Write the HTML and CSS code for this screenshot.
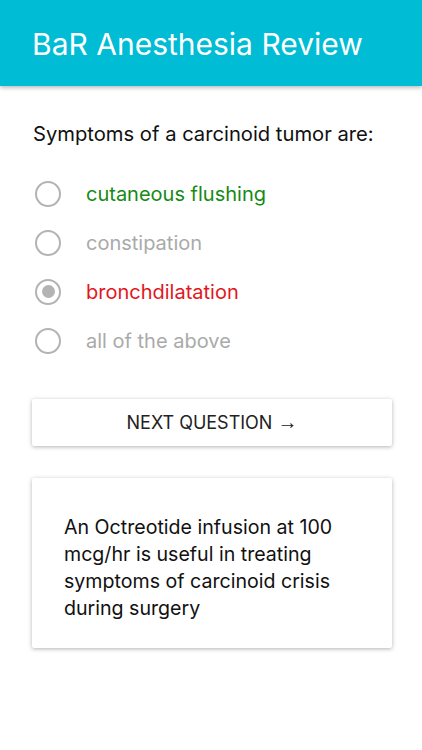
FILE: index.html
```html
<!DOCTYPE html>
<html>
<head>
<meta charset="utf-8">
<link rel="stylesheet" href="styles.css">
</head>
<body>
<header class="appbar"><h1 class="title">BaR Anesthesia Review</h1></header>
<main class="content">
  <p class="question">Symptoms of a carcinoid tumor are:</p>
  <ul class="options">
    <li class="option correct"><span class="radio"></span><span class="label">cutaneous flushing</span></li>
    <li class="option"><span class="radio"></span><span class="label">constipation</span></li>
    <li class="option wrong"><span class="radio checked"></span><span class="label">bronchdilatation</span></li>
    <li class="option"><span class="radio"></span><span class="label">all of the above</span></li>
  </ul>
  <button class="next">NEXT QUESTION <span class="arrow">→</span></button>
  <div class="card"><p class="explain">An Octreotide infusion at 100 mcg/hr is useful in treating symptoms of carcinoid crisis during surgery</p></div>
</main>
</body>
</html>
```
FILE: styles.css
```css
* { box-sizing: border-box; }
body { margin: 0; background: #fff; font-family: Inter, Roboto, "Liberation Sans", sans-serif; }
.appbar { height: 86px; background: #00bcd4; box-shadow: 0 2px 4px rgba(0,0,0,0.25); display: flex; align-items: center; padding: 0 32px; }
.title { margin: 0; color: #fff; font-weight: 400; font-size: 30px; position: relative; top: 1px; }
.content { padding: 0 30px 20px 32px; }
.question { margin: 34px 0 0 1px; font-size: 20.2px; color: #111; line-height: 28px; }
.options { list-style: none; margin: 21px 0 0; padding: 0; }
.option { display: flex; align-items: center; height: 49px; color: #aaa; font-size: 20px; }
.option.correct { color: #158a15; }
.option.wrong { color: #e2161d; }
.radio { width: 26px; height: 26px; border: 2.5px solid #b3b3b3; border-radius: 50%; margin-left: 3px; margin-right: 25px; display: flex; align-items: center; justify-content: center; }
.radio.checked::after { content: ""; width: 13px; height: 13px; border-radius: 50%; background: #b3b3b3; }
.next { display: block; width: 360px; height: 47px; margin-top: 34px; border: none; background: #fff; box-shadow: 0 1px 4px rgba(0,0,0,0.3); border-radius: 2px; font-family: Inter, Roboto, "Liberation Sans", sans-serif; font-size: 18px; color: #222; }
.arrow { font-family: "Liberation Serif", serif; font-size: 20px; }
.card { width: 360px; height: 170px; margin-top: 32px; background: #fff; box-shadow: 0 1px 4px rgba(0,0,0,0.3); border-radius: 2px; padding: 36px 30px 0 32px; }
.explain { margin: 0; font-size: 19.6px; line-height: 27px; color: #111; }
```
